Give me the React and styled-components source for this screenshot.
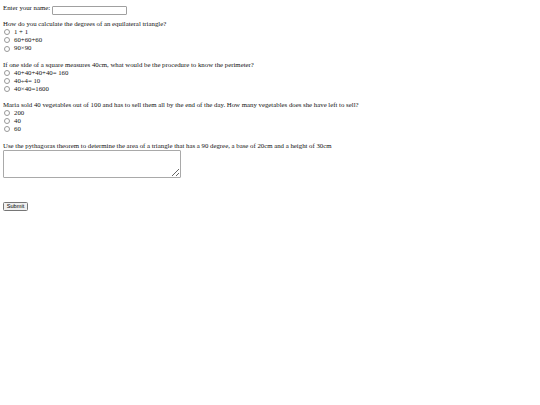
import React from "react";
import styled, { createGlobalStyle } from "styled-components";

const questions = [
	{
		name: "q1",
		text: "How do you calculate the degrees of an equilateral triangle?",
		options: ["1 + 1", "60+60+60", "90×90"],
	},
	{
		name: "q2",
		text: "If one side of a square measures 40cm, what would be the procedure to know the perimeter?",
		options: ["40+40+40+40= 160", "40÷4= 10", "40×40=1600"],
	},
	{
		name: "q3",
		text: "Maria sold 40 vegetables out of 100 and has to sell them all by the end of the day. How many vegetables does she have left to sell?",
		options: ["200", "40", "60"],
	},
];

export default function App() {
	return (
		<>
			<Global />
			<Form onSubmit={(e) => e.preventDefault()}>
				<Block>
					<Label>
						Enter your name: <NameInput type="text" />
					</Label>
				</Block>
				{questions.map((q) => (
					<Block key={q.name}>
						<Line>{q.text}</Line>
						{q.options.map((o) => (
							<Option key={o}>
								<Radio type="radio" name={q.name} value={o} />
								{o}
							</Option>
						))}
					</Block>
				))}
				<Block>
					<Line>
						Use the pythagoras theorem to determine the area of a triangle that
						has a 90 degree, a base of 20cm and a height of 30cm
					</Line>
					<Answer />
				</Block>
				<SubmitButton type="submit">Submit</SubmitButton>
			</Form>
		</>
	);
}

const Global = createGlobalStyle`
	body {
		margin: 4px 3px;
		background: #fff;
		color: #111;
		font-family: "Liberation Serif", "Times New Roman", serif;
		font-size: 6.8px;
		line-height: 8.1px;
	}
`;
const Form = styled.form`
	display: block;
`;
const Block = styled.div`
	margin-bottom: 8.1px;
`;
const Label = styled.label`
	display: block;
	height: 8.1px;
`;
const Line = styled.div`
	white-space: nowrap;
`;
const NameInput = styled.input`
	box-sizing: border-box;
	width: 75px;
	height: 9px;
	margin: 0;
	padding: 0 1px;
	border: 1px solid #a0a0a0;
	border-radius: 1px;
	font-size: 6px;
	vertical-align: -2px;
`;
const Option = styled.label`
	display: flex;
	align-items: center;
	height: 8.1px;
`;
const Radio = styled.input`
	appearance: none;
	box-sizing: border-box;
	width: 6px;
	height: 6px;
	margin: 0 4px 0 1px;
	border: 0.6px solid #999;
	border-radius: 50%;
	background: #fff;
`;
const Answer = styled.textarea`
	display: block;
	box-sizing: border-box;
	width: 178px;
	height: 28px;
	margin: 0 0 24px;
	border: 1px solid #a9a9a9;
	border-radius: 1px;
	resize: both;
`;
const SubmitButton = styled.button`
	box-sizing: border-box;
	height: 9px;
	width: 25px;
	padding: 0;
	margin: 0;
	font-family: Arial, "Liberation Sans", sans-serif;
	font-size: 5.6px;
	line-height: 7px;
	color: #000;
	background: #efefef;
	border: 0.6px solid #767676;
	border-radius: 1.5px;
`;
